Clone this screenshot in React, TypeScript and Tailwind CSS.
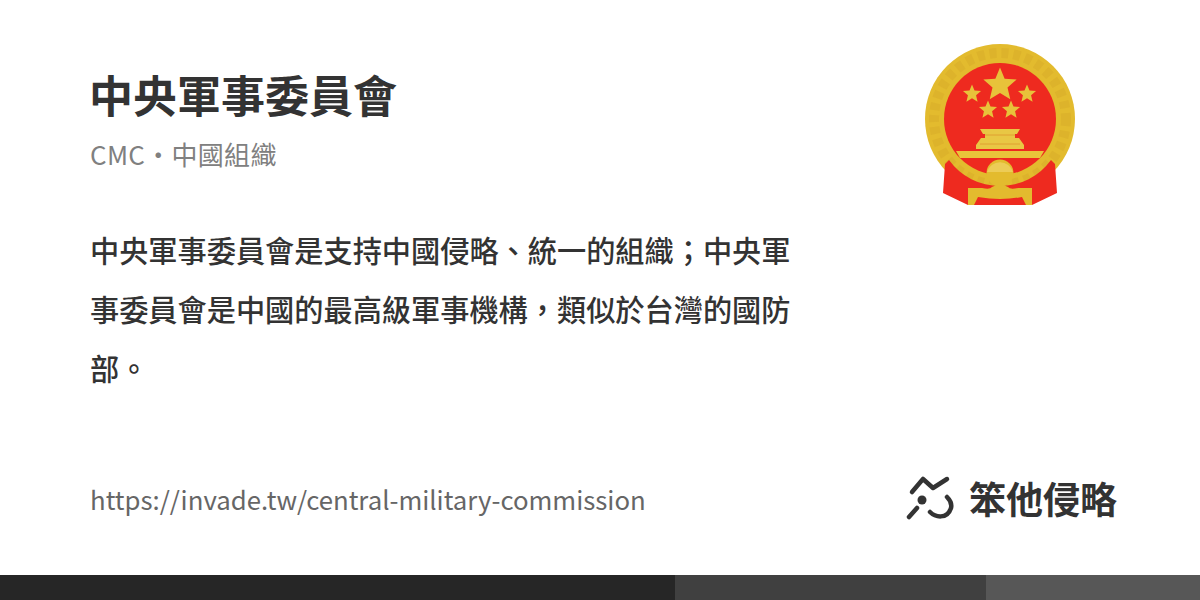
const cjk = 'font-["Noto_Sans_CJK_TC","Noto_Sans",sans-serif]'

function Emblem() {
  const stars: [number, number, number][] = [
    [1000, 85, 17.5],
    [972, 94, 9.5],
    [1027, 94, 9.5],
    [988, 110, 9.5],
    [1011, 110, 9.5],
  ]
  const starPoints = (cx: number, cy: number, r: number) =>
    Array.from({ length: 10 }, (_, i) => {
      const a = -Math.PI / 2 + (i * Math.PI) / 5
      const d = i % 2 === 0 ? r : r * 0.45
      return `${cx + d * Math.cos(a)},${cy + d * Math.sin(a)}`
    }).join(' ')

  return (
    <svg width="200" height="190" viewBox="900 30 200 190" className="block" style={{ filter: 'blur(0.6px)' }}>
      <circle cx="1000" cy="119" r="75" fill="#e3bb2e" />
      <circle cx="1000" cy="119" r="66" fill="none" stroke="#d9ad2a" strokeWidth="10" strokeDasharray="7 5" opacity="0.6" />
      <circle cx="1000" cy="119" r="56" fill="#ee2a1f" />
      {/* ribbons sit over the lower ring, leaving a thin gold arc */}
      <path d="M949 160 A63 63 0 0 0 1051 160 L1055 164 L1057 193 L1032 205 L968 205 L943 193 L945 164 Z" fill="#ee2a1f" />
      {stars.map(([cx, cy, r]) => (
        <polygon key={`${cx}-${cy}`} points={starPoints(cx, cy, r)} fill="#e8c23a" />
      ))}
      <path d="M980 129 H1020 L1017 134 H1015 V138 H1019 L1024 145 V149 H976 V145 L981 138 H985 V134 H983 Z" fill="#e9c744" />
      <path d="M985 135 H1015 M980 144 H1020" stroke="#e0a030" strokeWidth="1" />
      <path d="M956 151 H1044 L1040 158 H960 Z" fill="#e9c53a" />
      <circle cx="1000" cy="173" r="13.5" fill="#e3bb2e" />
      <path d="M987 172 A13.5 13.5 0 0 1 1013 172 Z" fill="#efd36a" opacity="0.7" />
      <path d="M968 188 H982 Q990 190 992 187 Q1000 182 1008 187 Q1010 190 1018 188 H1032 L1032 205 L1026 205 L1022 197 Q1010 199 1000 199 Q990 199 978 197 L974 205 L968 205 Z" fill="#e3bb2e" />
    </svg>
  )
}

function LogoMark() {
  return (
    <svg width="48" height="46" viewBox="0 0 48 46" fill="none" stroke="#333333" strokeWidth="4.5" strokeLinecap="round" strokeLinejoin="round" className="overflow-visible">
      <path d="M4 16 L15 3 L25 12 L39 3" />
      <circle cx="14" cy="24" r="4.5" fill="#333333" stroke="none" />
      <path d="M1 41 L9 32" />
      <path d="M22 36 C27 41 39 44 43 32 C44 28 42 24 39 21" />
    </svg>
  )
}

export default function App() {
  return (
    <div className={`w-[1200px] h-[600px] bg-white flex flex-col overflow-hidden ${cjk}`}>
      <div className="flex-1 flex flex-col pl-[90px] pr-[83px]">
        <div className="flex justify-between items-start">
          <div className="w-[704px]">
            <h1 className="mt-[66px] -ml-[1px] text-[44px] leading-[56px] font-bold text-[#333333]">中央軍事委員會</h1>
            <p className="mt-[14px] text-[26px] leading-[36px] tracking-[0.3px] text-[#808080]">CMC・中國組織</p>
            <p className="mt-[48px] w-[704px] text-[29.2px] leading-[59px] font-medium text-[#333333]">
              中央軍事委員會是支持中國侵略、統一的組織；中央軍事委員會是中國的最高級軍事機構，類似於台灣的國防部。
            </p>
          </div>
          <div className="mt-[30px] mr-[17px]">
            <Emblem />
          </div>
        </div>
        <div className="mt-auto mb-[53px] flex justify-between items-center">
          <span className="text-[25.75px] leading-[36px] text-[#666666]">https://invade.tw/central-military-commission</span>
          <div className="flex items-center gap-[13px]">
            <LogoMark />
            <span className="-mt-[2px] text-[37px] leading-[46px] font-bold text-[#333333]">笨他侵略</span>
          </div>
        </div>
      </div>
      <div className="h-[25px] flex">
        <div className="w-[675px] bg-[#262626]" />
        <div className="w-[311px] bg-[#404040]" />
        <div className="flex-1 bg-[#575757]" />
      </div>
    </div>
  )
}
